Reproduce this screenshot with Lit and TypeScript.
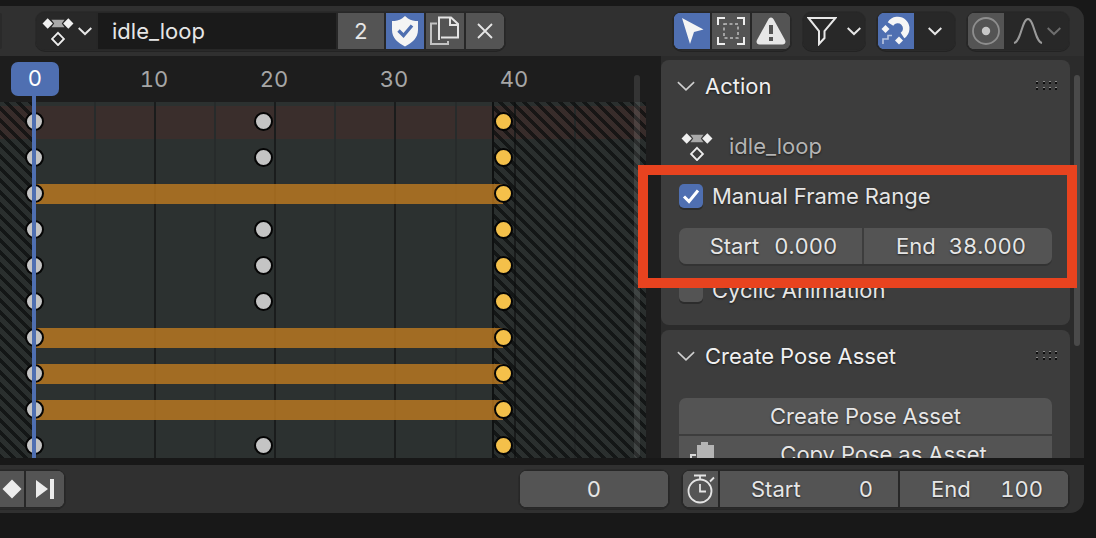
import { LitElement, css, html, svg } from "lit";
import { customElement } from "lit/decorators.js";

const chevron = (size = 14, color = "#e6e6e6", width = 2.2) => html`<svg class="ico" width=${size} height=${size} viewBox="0 0 16 16">
  <path d="M0.800 4.500 L8 11.500 L15.200 4.500" fill="none" stroke=${color} stroke-width=${width} />
</svg>`;

const actionIcon = () => html`<svg class="ico" width="32" height="30" viewBox="0 0 34 32">
  <path d="M10 4 H24 L21 8 L24 12 H10 L13 8 Z" fill="#a9a9a9" />
  <path d="M6 2.500 L11.500 8 L6 13.500 L0.500 8 Z M28 2.500 L33.500 8 L28 13.500 L22.500 8 Z" fill="#f0f0f0" />
  <path d="M17 18 L23.300 24.500 L17 31 L10.700 24.500 Z" fill="none" stroke="#eee" stroke-width="2" />
</svg>`;

const shieldIcon = () => html`<svg class="ico" width="28" height="32" viewBox="0 0 28 32">
  <path d="M14 1 L17 3.500 C20 5.500 23.500 6 27 6 V15 C27 23 21 28 14 31.500 C7 28 1 23 1 15 V6 C4.500 6 8 5.500 11 3.500 Z" fill="#f4f4f4" />
  <path d="M7.500 15.500 L12.500 20.500 L21 10.500" fill="none" stroke="#4f6fb1" stroke-width="3.400" />
</svg>`;

const copyIcon = () => html`<svg class="ico" width="30" height="30" viewBox="0 0 30 30">
  <path d="M9 24 V1.500 H21 L28 8 V21.500 H11" fill="none" stroke="#e4e4e4" stroke-width="2" />
  <path d="M20 1.500 V9 H28" fill="none" stroke="#e4e4e4" stroke-width="2" />
  <path d="M7 7.500 H1 V28 H18 V25" fill="none" stroke="#c2c2c2" stroke-width="2" />
</svg>`;

const closeIcon = () => html`<svg class="ico" width="18" height="18" viewBox="0 0 18 18">
  <path d="M2 2 L16 16 M16 2 L2 16" stroke="#e6e6e6" stroke-width="1.800" fill="none" />
</svg>`;

const cursorIcon = () => html`<svg class="ico" width="24" height="28" viewBox="0 0 24 28">
  <path d="M2 1 L23.500 12.500 L14 15 L10 27 Z" fill="#f4f4f4" />
</svg>`;

const boxSelectIcon = () => html`<svg class="ico" width="30" height="30" viewBox="0 0 30 30">
  <path d="M9 2 H2 V9 M21 2 H28 V9 M9 28 H2 V21 M21 28 H28 V21" fill="none" stroke="#eee" stroke-width="2" />
  <rect x="8" y="8" width="14" height="14" fill="none" stroke="#bdbdbd" stroke-width="1.500" stroke-dasharray="3 2.500" />
</svg>`;

const warningIcon = () => html`<svg class="ico" width="30" height="28" viewBox="0 0 30 28">
  <path d="M15 0.500 C16.500 0.500 17.200 1.500 18 3 L29 23 C30.200 25.500 29 27.500 26.500 27.500 H3.500 C1 27.500 -0.200 25.500 1 23 L12 3 C12.800 1.500 13.500 0.500 15 0.500 Z" fill="#e6e6e6" />
  <rect x="13" y="8" width="4" height="9" fill="#545454" />
  <rect x="13" y="20" width="4" height="4" fill="#545454" />
</svg>`;

const filterIcon = () => html`<svg class="ico" width="30" height="30" viewBox="0 0 30 30">
  <path d="M1.500 2 H28.500 L17.500 15 V22 L12 28 V15 Z" fill="none" stroke="#e8e8e8" stroke-width="2" />
</svg>`;

// horseshoe opening to the lower left, with the snap step underneath
const magnetIcon = () => html`<svg class="ico" width="30" height="32" viewBox="0 0 30 32">
  <path d="M9.500 9 A8.500 8.500 0 1 1 21.500 20.500" fill="none" stroke="#f6f6f6" stroke-width="6.500" />
  <path d="M4.500 10 L8.500 14 L4.500 18 L0.500 14 Z M18 21.500 L22 25.500 L18 29.500 L14 25.500 Z" fill="#f6f6f6" />
  <path d="M2 29 V24 H7 V20.500 H11" fill="none" stroke="#b9c6e0" stroke-width="1.600" />
</svg>`;

const proportionalIcon = () => html`<svg class="ico" width="30" height="30" viewBox="0 0 30 30">
  <circle cx="15" cy="15" r="13" fill="none" stroke="#8e8e8e" stroke-width="1.800" />
  <circle cx="15" cy="15" r="4.200" fill="#c8c8c8" />
</svg>`;

const curveIcon = () => html`<svg class="ico" width="30" height="26" viewBox="0 0 30 26">
  <path d="M1 25 C8 24 9 1 15 1 C21 1 22 24 29 25" fill="none" stroke="#9a9a9a" stroke-width="2" />
</svg>`;

const diamondIcon = () => html`<svg class="ico" width="20" height="20" viewBox="0 0 20 20">
  <path d="M10 0.500 L19.500 10 L10 19.500 L0.500 10 Z" fill="#ececec" />
</svg>`;

const nextKeyIcon = () => html`<svg class="ico" width="20" height="20" viewBox="0 0 20 20">
  <path d="M1 1 L13 10 L1 19 Z" fill="#ececec" />
  <rect x="15" y="0" width="4" height="20" fill="#ececec" />
</svg>`;

const timerIcon = () => html`<svg class="ico" width="28" height="30" viewBox="0 0 28 30">
  <circle cx="13" cy="17" r="11.500" fill="none" stroke="#e4e4e4" stroke-width="1.800" />
  <path d="M7 1.500 H19 M13 1.500 V5.500 M23 7.500 L27 3.500 M13 10 V17.500 H19" fill="none" stroke="#e4e4e4" stroke-width="1.800" />
</svg>`;

const clipboardIcon = () => html`<svg class="ico" width="26" height="30" viewBox="0 0 26 30">
  <path d="M7 4 H11 V1 H18 V4 H24 V26 H7 Z" fill="#b4b4b4" />
  <path d="M6 14 H1 V26 H6" fill="none" stroke="#d8d8d8" stroke-width="2" />
</svg>`;

const gripIcon = () => html`<svg class="ico" width="22" height="10" viewBox="0 0 22 10">
  ${[1, 8, 14, 20].map((x) =>
    [1, 7].map(
      (y) => svg`<rect x=${x} y=${y} width="2" height="2" fill="#0e0e0e" /><rect x=${x} y=${y - 1} width="2" height="1" fill="#8a8a8a" />`,
    ),
  )}
</svg>`;

const TRACKS = [
  { height: 33, warn: true, hold: false, mid: true },
  { height: 36, warn: false, hold: false, mid: true },
  { height: 36, warn: false, hold: true, mid: false },
  { height: 36, warn: false, hold: false, mid: true },
  { height: 36, warn: false, hold: false, mid: true },
  { height: 36, warn: false, hold: false, mid: true },
  { height: 36, warn: false, hold: true, mid: false },
  { height: 36, warn: false, hold: true, mid: false },
  { height: 36, warn: false, hold: true, mid: false },
  { height: 36, warn: false, hold: false, mid: true },
];

const GRID = [
  { x: 95, major: false },
  { x: 155, major: true },
  { x: 215, major: false },
  { x: 275, major: true },
  { x: 335, major: false },
  { x: 395, major: true },
  { x: 456, major: false },
  { x: 515, major: true },
  { x: 575, major: false },
];

@customElement("app-root")
export class AppRoot extends LitElement {
  static styles = css`
    :host {
      display: grid;
      grid-template-rows: 50px 402px 48px;
      box-sizing: border-box;
      position: relative;
      width: 1096px;
      height: 538px;
      padding: 6px 12px 0 0;
      overflow: hidden;
      background: #181818;
      font-family: Inter, "Liberation Sans", sans-serif;
      font-size: 22px;
      font-variant-numeric: tabular-nums;
      color: #e6e6e6;
    }

    .ico {
      display: block;
      flex: none;
    }

    .header {
      display: flex;
      align-items: center;
      justify-content: space-between;
      padding: 0 15px 0 0;
      background: #303030;
      border-top-right-radius: 14px;
    }

    .left {
      display: flex;
      align-items: center;
      gap: 34px;
    }

    .stub {
      width: 2px;
      height: 36px;
      border-radius: 0 3px 3px 0;
      background: #2a2a2a;
    }

    .tools {
      display: flex;
      align-items: center;
      gap: 12px;
    }

    .group {
      display: flex;
      gap: 2px;
      height: 36px;
      padding: 1px;
      border-radius: 9px;
      background: #272727;
      box-shadow: 0 0 0 1px #2a2a2a, 0 1px 0 1px #232323;
      overflow: hidden;
    }

    .btn {
      display: flex;
      align-items: center;
      justify-content: center;
      width: 38px;
      background: #545454;
    }

    .btn.blue {
      background: #4f6fb1;
    }

    .btn.narrow {
      width: 36px;
    }

    .btn.dark {
      background: #282828;
      gap: 10px;
    }

    .btn.wide {
      width: 60px;
    }

    .btn.curve {
      width: 62px;
      gap: 4px;
    }

    .btn.first {
      width: 59px;
      background: #282828;
      gap: 4px;
    }

    .name {
      width: 238px;
      box-sizing: border-box;
      padding-left: 14px;
      line-height: 36px;
      background: #1a1a1a;
    }

    .users {
      width: 46px;
    }

    .main {
      display: grid;
      grid-template-columns: 646px 438px;
      overflow: hidden;
    }

    .sheet {
      position: relative;
      display: grid;
      grid-template-rows: 46px 1fr;
      overflow: hidden;
      background: #1d1d1d;
    }

    .ruler {
      position: relative;
    }

    .tick {
      position: absolute;
      top: 10px;
      width: 40px;
      margin-left: -20px;
      text-align: center;
      color: #a6a6a6;
      line-height: 27px;
    }

    .frame {
      position: absolute;
      left: 11px;
      top: 6px;
      width: 48px;
      height: 34px;
      border-radius: 7px;
      background: #4f6fb1;
      text-align: center;
      line-height: 33px;
      color: #fff;
    }

    .tracks {
      position: relative;
      overflow: hidden;
      background: #2c3130;
    }

    .layer {
      position: absolute;
      inset: 0;
      padding-top: 4px;
    }

    .band.warn {
      background: #3a2e2c;
    }

    .line {
      position: absolute;
      top: 0;
      bottom: 0;
      width: 2px;
      margin-left: -1px;
      background: #272b2b;
    }

    .line.major {
      background: #1a1c1c;
    }

    .hatch {
      position: absolute;
      top: 0;
      bottom: 0;
      background: repeating-linear-gradient(45deg, rgba(10, 12, 12, 0.72) 0 3px, rgba(0, 0, 0, 0.04) 3px 8.485px);
    }

    .hatch.before {
      left: 0;
      width: 32px;
    }

    .hatch.after {
      left: 492px;
      right: 0;
      border-left: 2px solid #0f1111;
    }

    .track {
      position: relative;
    }

    .hold {
      position: absolute;
      left: 34px;
      width: 469px;
      height: 20px;
      top: 9px;
      background: rgba(196, 125, 32, 0.78);
    }

    .key {
      position: absolute;
      width: 15px;
      height: 15px;
      border: 2px solid #050505;
      border-radius: 50%;
      margin: -9.5px 0 0 -9.5px;
      top: 18px;
      background: #c4c4c4;
    }

    .track.warn .key {
      top: 15px;
    }

    .key.sel {
      background: #f4c04a;
    }

    .playhead {
      position: absolute;
      left: 32px;
      top: 40px;
      bottom: 0;
      width: 4px;
      background: #4f6fb1;
    }

    .vscroll {
      position: absolute;
      left: 634px;
      top: 19px;
      bottom: 0;
      width: 6px;
      border-radius: 3px;
      background: rgba(255, 255, 255, 0.1);
    }

    .side {
      position: relative;
      display: flex;
      flex-direction: column;
      gap: 5px;
      box-sizing: border-box;
      padding: 4px 14px 0 15px;
      overflow: hidden;
      background: #2b2b2b;
      box-shadow: inset 15px 0 0 #1d1d1d;
    }

    .panel {
      flex: none;
      border-radius: 8px;
      background: #3d3d3d;
      padding: 0 18px;
    }

    .panel.action {
      height: 265px;
    }

    .panel.pose {
      height: 200px;
    }

    .panel-head {
      display: flex;
      align-items: center;
      gap: 10px;
      height: 52px;
      margin-left: -2px;
      color: #f0f0f0;
      text-shadow: 0 1px 2px rgba(0, 0, 0, 0.6);
    }

    .panel-head .ico:last-child {
      margin-left: auto;
      margin-right: -5px;
    }

    .asset {
      display: flex;
      align-items: center;
      gap: 16px;
      height: 32px;
      margin-top: 18px;
      padding-left: 2px;
      color: #b4b4b4;
      text-shadow: 0 1px 2px rgba(0, 0, 0, 0.6);
    }

    .check {
      display: flex;
      align-items: center;
      gap: 9px;
      height: 24px;
      text-shadow: 0 1px 2px rgba(0, 0, 0, 0.6);
    }

    .check.manual {
      margin-top: 22px;
    }

    .check.cyclic {
      margin-top: 14px;
    }

    .box {
      display: flex;
      align-items: center;
      justify-content: center;
      width: 24px;
      height: 24px;
      border-radius: 5px;
      background: #545454;
      box-shadow: 0 2px 0 #2c2c2c;
    }

    .box.on {
      background: #4f6fb1;
    }

    .fields {
      display: grid;
      grid-template-columns: 183px 188px;
      gap: 2px;
      height: 36px;
      margin-top: 20px;
      border-radius: 7px;
      overflow: hidden;
      box-shadow: 0 2px 0 #333;
    }

    .field {
      display: flex;
      align-items: center;
      justify-content: center;
      gap: 15px;
      padding-left: 6px;
      background: #545454;
      text-shadow: 0 1px 2px rgba(0, 0, 0, 0.6);
    }

    .field:last-child {
      gap: 13px;
    }

    .actions {
      display: flex;
      flex-direction: column;
      gap: 2px;
      margin-top: 16px;
    }

    .action-btn {
      position: relative;
      height: 36px;
      line-height: 36px;
      text-align: center;
      background: #545454;
      text-shadow: 0 1px 2px rgba(0, 0, 0, 0.6);
    }

    .action-btn:first-child {
      border-radius: 7px 7px 0 0;
    }

    .action-btn.with-icon {
      padding-left: 36px;
    }

    .action-btn .ico {
      position: absolute;
      left: 11px;
      top: 5px;
    }

    .side-scroll {
      position: absolute;
      left: 428px;
      top: 19px;
      width: 6px;
      height: 271px;
      border-radius: 3px;
      background: #4a4a4a;
    }

    .footer {
      display: flex;
      align-items: center;
      margin-top: 7px;
      height: 48px;
      padding-right: 15px;
      background: #303030;
      border-bottom-right-radius: 14px;
    }

    .footer .group {
      box-shadow: 0 0 0 1px #2a2a2a, 0 1px 0 1px #272727;
    }

    .keys {
      margin-right: auto;
      border-radius: 0 9px 9px 0;
      padding-left: 0;
    }

    .keys .btn:first-child {
      width: 24px;
      justify-content: flex-start;
    }

    .keys .btn:first-child .ico {
      margin-left: 2px;
    }

    .current {
      width: 148px;
      margin-right: 13px;
    }

    .current .btn {
      width: 100%;
    }

    .range .timer {
      width: 35px;
    }

    .range-field {
      display: flex;
      align-items: center;
      justify-content: space-between;
      box-sizing: border-box;
      background: #545454;
      text-shadow: 0 1px 2px rgba(0, 0, 0, 0.6);
    }

    .range-field.start {
      width: 178px;
      padding: 0 25px 0 31px;
    }

    .range-field.end {
      width: 168px;
      padding: 0 25px 0 31px;
    }

    .annotation {
      position: absolute;
      left: 638px;
      top: 165px;
      width: 439px;
      height: 123px;
      box-sizing: border-box;
      border: 10px solid #e8431f;
    }
  `;

  renderMarks(track: (typeof TRACKS)[number]) {
    return html`<div class="track ${track.warn ? "warn" : ""}" style="height: ${track.height}px">
      ${track.hold ? html`<div class="hold"></div>` : null}
      <div class="key" style="left: 34px"></div>
      ${track.mid ? html`<div class="key" style="left: 263px"></div>` : null}
      <div class="key sel" style="left: 503px"></div>
    </div>`;
  }

  render() {
    return html`
      <div class="header">
        <div class="left">
          <div class="stub"></div>
          <div class="group">
            <div class="btn first">${actionIcon()}${chevron()}</div>
            <div class="name">idle_loop</div>
            <div class="btn users">2</div>
            <div class="btn blue">${shieldIcon()}</div>
            <div class="btn">${copyIcon()}</div>
            <div class="btn">${closeIcon()}</div>
          </div>
        </div>
        <div class="tools">
          <div class="group">
            <div class="btn blue narrow">${cursorIcon()}</div>
            <div class="btn">${boxSelectIcon()}</div>
            <div class="btn">${warningIcon()}</div>
          </div>
          <div class="group">
            <div class="btn dark wide">${filterIcon()}${chevron()}</div>
          </div>
          <div class="group">
            <div class="btn blue narrow">${magnetIcon()}</div>
            <div class="btn dark">${chevron()}</div>
          </div>
          <div class="group">
            <div class="btn narrow">${proportionalIcon()}</div>
            <div class="btn dark curve">${curveIcon()}${chevron(14, "#6e6e6e")}</div>
          </div>
        </div>
      </div>

      <div class="main">
        <div class="sheet">
          <div class="ruler">
            ${[10, 20, 30, 40].map((n) => html`<div class="tick" style="left: ${34 + n * 12}px">${n}</div>`)}
          </div>
          <div class="tracks">
            <div class="layer">
              ${TRACKS.map((t) => html`<div class="band ${t.warn ? "warn" : ""}" style="height: ${t.height}px"></div>`)}
            </div>
            ${GRID.map((line) => html`<div class="line ${line.major ? "major" : ""}" style="left: ${line.x}px"></div>`)}
            <div class="hatch before"></div>
            <div class="hatch after"></div>
            <div class="layer">${TRACKS.map((t) => this.renderMarks(t))}</div>
          </div>
          <div class="vscroll"></div>
          <div class="playhead"></div>
          <div class="frame">0</div>
        </div>
        <div class="side">
          <div class="panel action">
            <div class="panel-head">${chevron(18, "#cfcfcf", 1.4)}<span>Action</span>${gripIcon()}</div>
            <div class="asset">${actionIcon()}<span>idle_loop</span></div>
            <div class="check manual">
              <div class="box on">
                <svg class="ico" width="18" height="16" viewBox="0 0 18 16">
                  <path d="M2 8.500 L7 13.500 L16 2.500" fill="none" stroke="#fff" stroke-width="3" />
                </svg>
              </div>
              <span>Manual Frame Range</span>
            </div>
            <div class="fields">
              <div class="field"><span>Start</span><span>0.000</span></div>
              <div class="field"><span>End</span><span>38.000</span></div>
            </div>
            <div class="check cyclic">
              <div class="box"></div>
              <span>Cyclic Animation</span>
            </div>
          </div>
          <div class="panel pose">
            <div class="panel-head">${chevron(18, "#cfcfcf", 1.4)}<span>Create Pose Asset</span>${gripIcon()}</div>
            <div class="actions">
              <div class="action-btn">Create Pose Asset</div>
              <div class="action-btn with-icon">${clipboardIcon()}Copy Pose as Asset</div>
            </div>
          </div>
          <div class="side-scroll"></div>
        </div>
      </div>

      <div class="footer">
        <div class="group keys">
          <div class="btn">${diamondIcon()}</div>
          <div class="btn">${nextKeyIcon()}</div>
        </div>
        <div class="group current"><div class="btn">0</div></div>
        <div class="group range">
          <div class="btn timer">${timerIcon()}</div>
          <div class="range-field start"><span>Start</span><span>0</span></div>
          <div class="range-field end"><span>End</span><span>100</span></div>
        </div>
      </div>

      <div class="annotation"></div>
    `;
  }
}
